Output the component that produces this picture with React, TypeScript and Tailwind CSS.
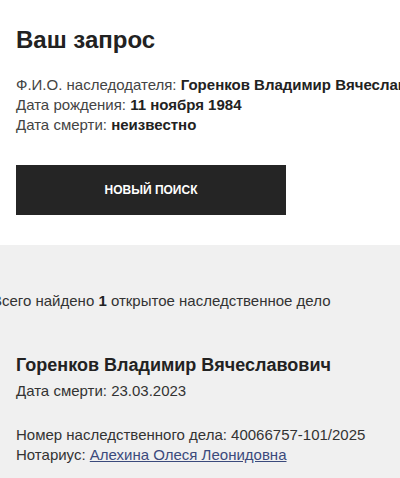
import React from 'react';

export default function App() {
  return (
    <div className="w-[400px] h-[478px] overflow-hidden bg-white text-[#222] font-['Liberation_Sans',Arial,sans-serif]">
      {/* Request summary */}
      <div className="px-4 pt-[26px] pb-[30px]">
        <h1 className="text-[24px] leading-[28px] font-bold">Ваш запрос</h1>
        <div className="mt-[21px] text-[15px] leading-[20px] whitespace-nowrap">
          <p>
            <span className="text-[#444]">Ф.И.О. наследодателя: </span>
            <b>Горенков Владимир Вячеславович</b>
          </p>
          <p>
            <span className="text-[#444]">Дата рождения: </span>
            <b>11 ноября 1984</b>
          </p>
          <p>
            <span className="text-[#444]">Дата смерти: </span>
            <b>неизвестно</b>
          </p>
        </div>
        <button className="mt-[30px] w-[270px] h-[50px] bg-[#252525] text-white text-[12px] font-bold uppercase">
          Новый поиск
        </button>
      </div>

      {/* Results */}
      <div className="bg-[#f0f0f0] px-4 pt-[46px] pb-6 text-[15px] leading-[20px]">
        <p className="-ml-6 text-[#333] whitespace-nowrap">
          Всего найдено <b className="text-[#222]">1</b> открытое наследственное дело
        </p>
        <div className="mt-[42px]">
          <h2 className="text-[18px] leading-[24px] font-bold">Горенков Владимир Вячеславович</h2>
          <p className="mt-[4px] text-[#333]">Дата смерти: 23.03.2023</p>
          <div className="mt-[24px] text-[#333]">
            <p>Номер наследственного дела: 40066757-101/2025</p>
            <p>
              Нотариус: <a href="#" className="text-[#3b4a7c] underline">Алехина Олеся Леонидовна</a>
            </p>
          </div>
        </div>
      </div>
    </div>
  );
}
